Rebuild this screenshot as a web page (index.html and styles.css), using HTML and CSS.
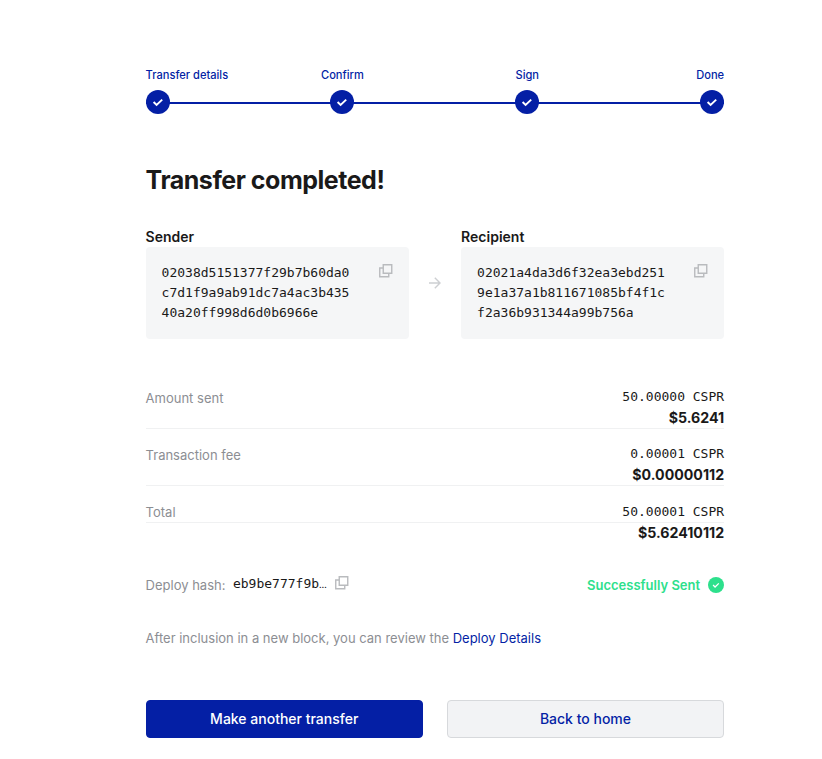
FILE: index.html
```html
<!DOCTYPE html>
<html lang="en">
<head>
<meta charset="utf-8">
<title>Transfer completed</title>
<link rel="stylesheet" href="styles.css">
</head>
<body>
<svg width="0" height="0" class="defs">
  <symbol id="check" viewBox="0 0 24 24"><path d="M7.6 12l3 3 5.6-5.4" fill="none" stroke="#fff" stroke-width="1.9"/></symbol>
  <symbol id="copy" viewBox="0 0 14 14"><path d="M4.25.75h8.5v8.5h-8.5zM4.25 4H.75v8.75h9V9.25" fill="none" stroke="#b9bbbe" stroke-width="1.4"/></symbol>
</svg>
<main class="page">
  <ol class="steps">
    <li class="step first"><span>Transfer details</span><svg><use href="#check"/></svg></li>
    <li class="step"><span>Confirm</span><svg><use href="#check"/></svg></li>
    <li class="step"><span>Sign</span><svg><use href="#check"/></svg></li>
    <li class="step last"><span>Done</span><svg><use href="#check"/></svg></li>
  </ol>
  <h1>Transfer completed!</h1>
  <section class="parties">
    <div class="party">
      <h2>Sender</h2>
      <div class="key"><code>02038d5151377f29b7b60da0<br>c7d1f9a9ab91dc7a4ac3b435<br>40a20ff998d6d0b6966e</code><svg class="copy"><use href="#copy"/></svg></div>
    </div>
    <svg class="arrow" viewBox="0 0 12 12"><path d="M0 6h10.5M5.8.8L11 6l-5.2 5.2" fill="none" stroke="#cdcfd2" stroke-width="1.4"/></svg>
    <div class="party">
      <h2>Recipient</h2>
      <div class="key"><code>02021a4da3d6f32ea3ebd251<br>9e1a37a1b811671085bf4f1c<br>f2a36b931344a99b756a</code><svg class="copy"><use href="#copy"/></svg></div>
    </div>
  </section>
  <section class="amounts">
    <div class="row"><span class="label">Amount sent</span><code>50.00000 CSPR</code></div>
    <div class="fiat ruled">$5.6241</div>
    <div class="row"><span class="label">Transaction fee</span><code>0.00001 CSPR</code></div>
    <div class="fiat ruled">$0.00000112</div>
    <div class="row total"><span class="label">Total</span><code>50.00001 CSPR</code></div>
    <div class="fiat">$5.62410112</div>
  </section>
  <div class="deploy">
    <span class="label">Deploy hash:</span><code>eb9be777f9b<span class="dots">…</span></code><svg class="copy"><use href="#copy"/></svg>
    <span class="status">Successfully Sent</span><svg class="badge"><use href="#check"/></svg>
  </div>
  <p class="note">After inclusion in a new block, you can review the <a>Deploy Details</a></p>
  <div class="actions"><button class="primary">Make another transfer</button><button>Back to home</button></div>
</main>
</body>
</html>
```
FILE: styles.css
```css
* { box-sizing: border-box; }
body { margin: 0; background: #fff; color: #1a1919; font: 13px/20px Inter, sans-serif; }
h1, h2, p, ol { margin: 0; padding: 0; }
code { font: 13px/20px "DejaVu Sans Mono", monospace; white-space: nowrap; }
.defs { display: block; height: 0; }
.page { width: 578.5px; margin-left: 145.6px; padding-top: 67px; }
.steps { display: flex; justify-content: space-between; list-style: none; height: 48px; background: linear-gradient(#041fa5, #041fa5) 0 34.5px / 100% 2px no-repeat; }
.step { width: 24px; display: flex; flex-direction: column; align-items: center; color: #041fa5; font-size: 11.1px; font-weight: 500; line-height: 16px; white-space: nowrap; }
.step svg { width: 24px; height: 24px; flex: none; margin-top: 7.4px; border-radius: 50%; background: #041fa5; }
.first { align-items: flex-start; }
.last { align-items: flex-end; }
h1 { margin-top: 49px; font-size: 25px; line-height: 32px; font-weight: 700; letter-spacing: -0.48px; }
.parties { display: flex; justify-content: space-between; margin-top: 31px; }
.party { width: 263px; }
h2 { font-size: 14px; line-height: 20px; font-weight: 600; }
.key { height: 92px; background: #f5f6f7; border-radius: 4px; padding: 16px; display: flex; justify-content: space-between; }
.copy { width: 14px; height: 14px; margin-top: 1px; }
.arrow { width: 12px; height: 12px; margin-top: 50px; }
.amounts { margin-top: 48px; }
.row { display: flex; justify-content: space-between; }
.row .label { padding-top: 1px; height: 20px; }
.label { color: #8c8e93; }
.fiat { text-align: right; font-size: 14.2px; line-height: 20px; font-weight: 700; }
.ruled { border-bottom: 1px solid #f0f1f2; line-height: 22px; height: 22px; }
.ruled + .row { margin-top: 15px; }
.total { border-bottom: 1px solid #f0f1f2; height: 22px; }
.total code { padding-top: 1px; }
.deploy { display: flex; align-items: center; margin-top: 33px; }
.deploy .label, .status { margin-top: -1px; }
.deploy code { margin: -2px 8px 0 7.5px; }
.dots { font-family: Inter, sans-serif; display: inline-block; width: 8px; font-size: 9px; }
.deploy .copy { margin-top: -6px; }
.status { margin-left: auto; color: #2de08c; font-weight: 600; }
.badge { width: 16px; height: 16px; margin: -1px 0 0 8px; border-radius: 50%; background: #2de08c; }
.note { margin-top: 33px; color: #8c8e93; }
.note a { color: #041fa5; }
.actions { display: flex; gap: 24px; margin-top: 52px; }
button { flex: 1; height: 38px; padding: 0 6px 2px; border: 1px solid #d7d9dc; border-radius: 4px; background: #f2f3f5; color: #041fa5; font: 500 14px Inter, sans-serif; }
.primary { background: #041fa5; color: #fff; border-color: #041fa5; }
```
